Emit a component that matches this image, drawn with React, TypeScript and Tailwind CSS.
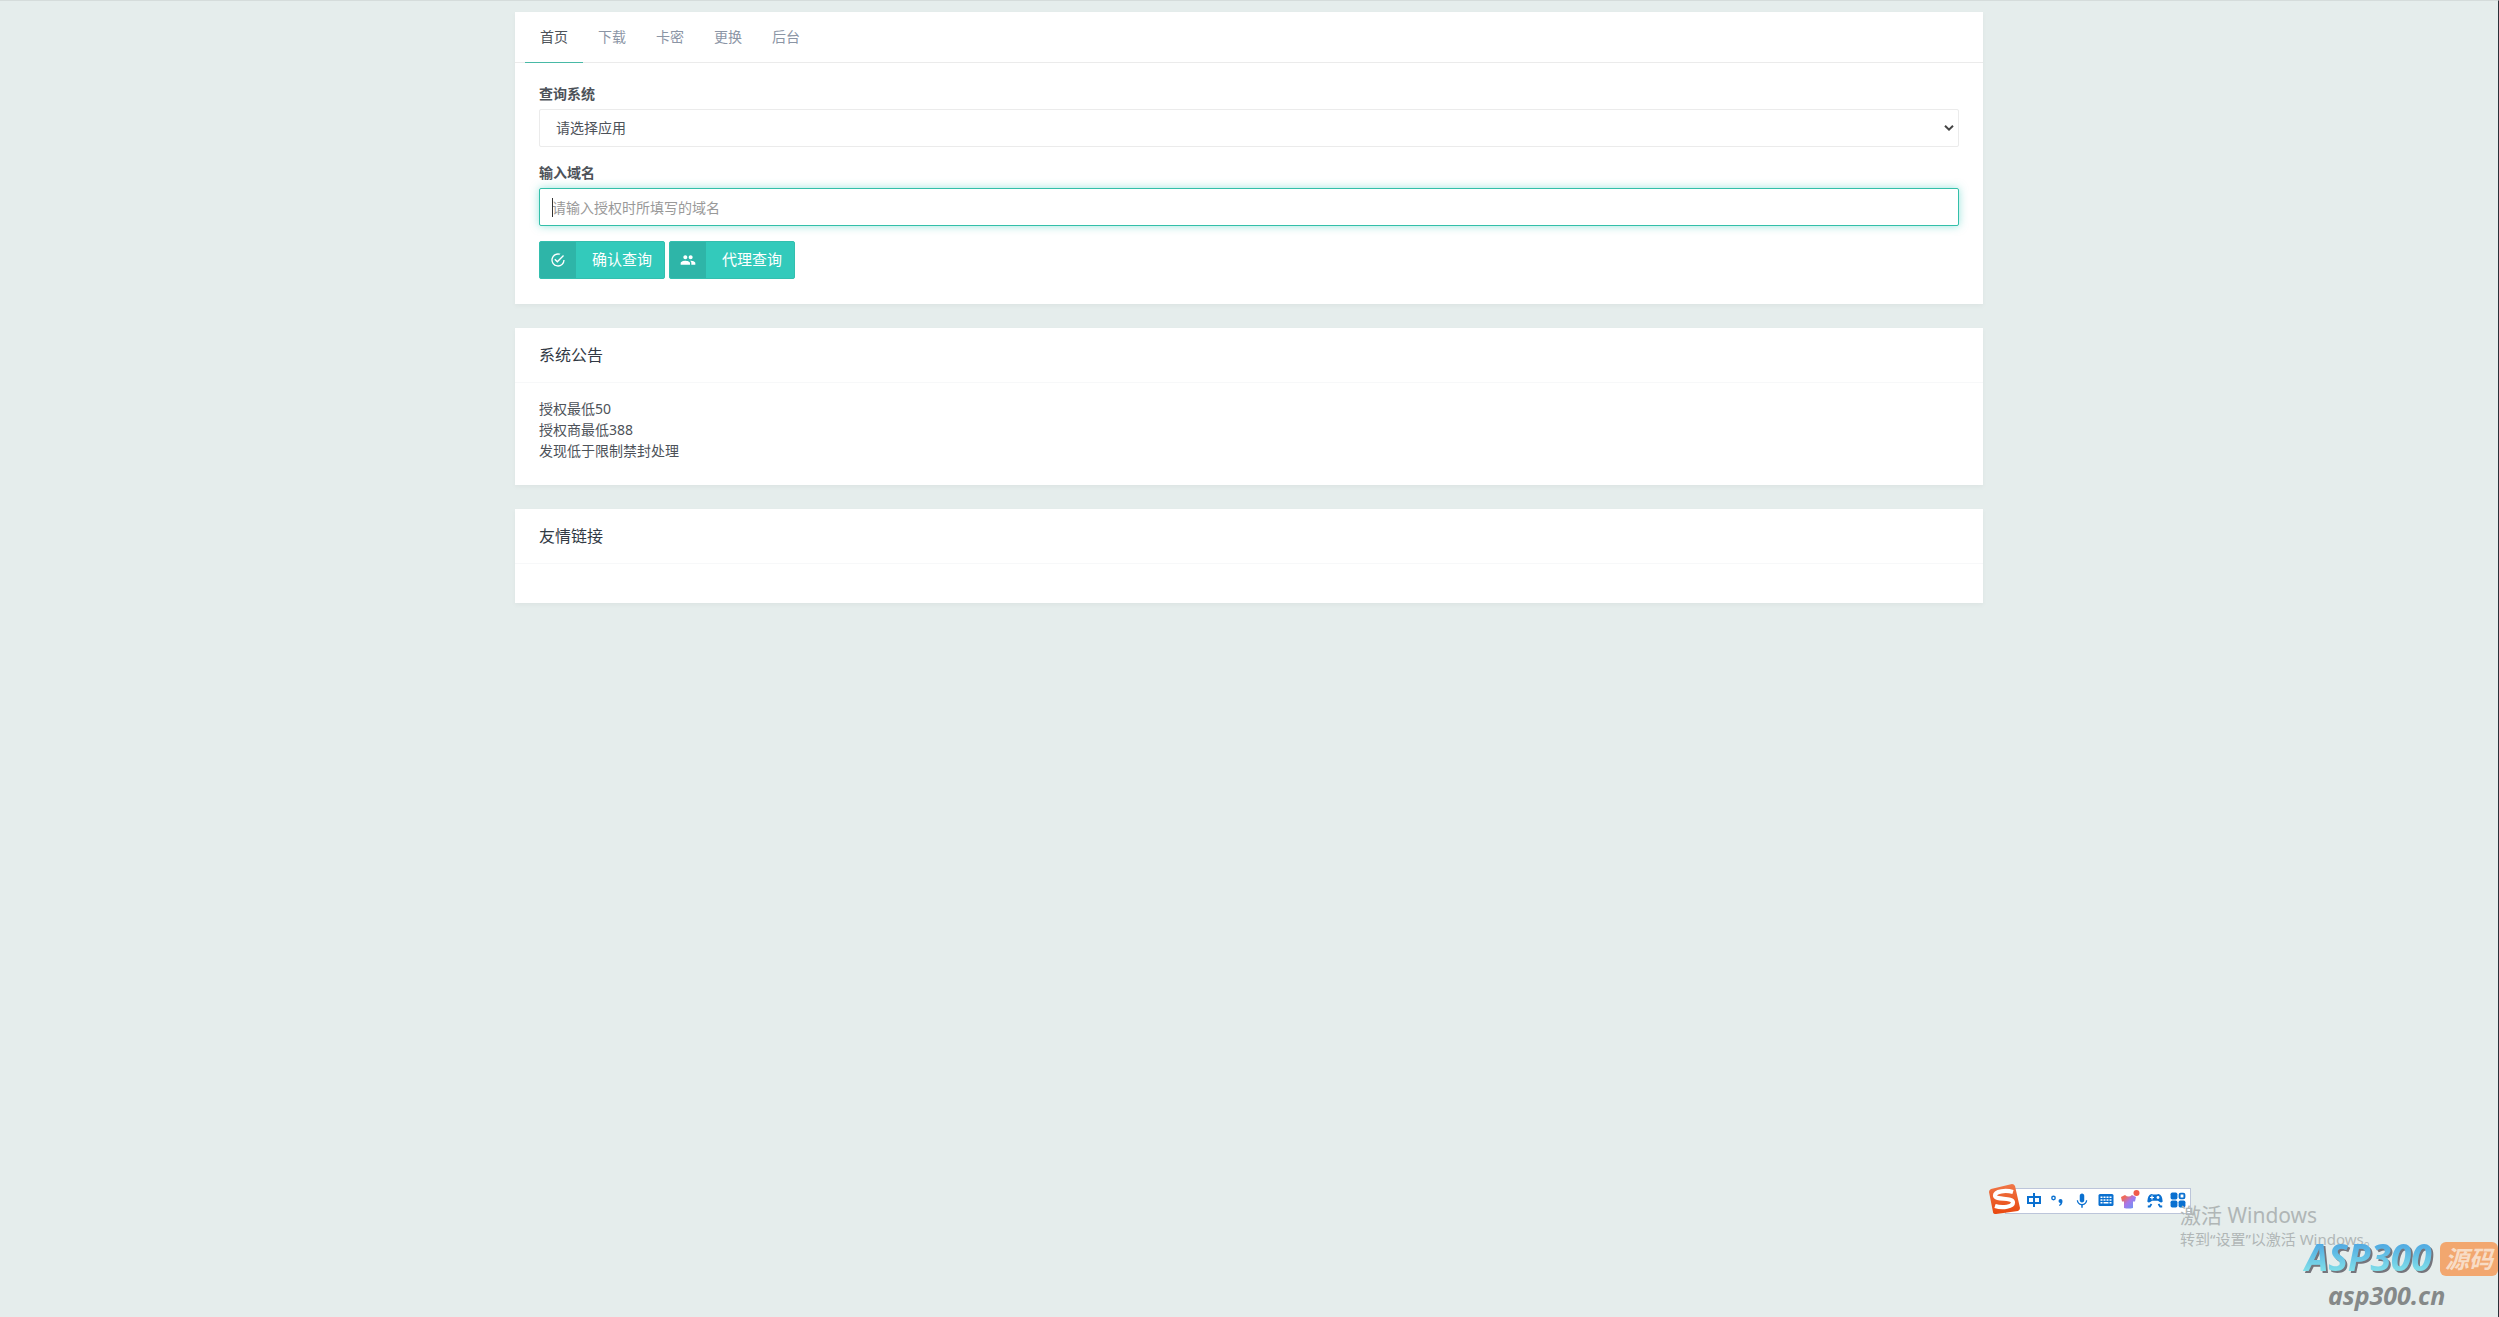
import React from "react";
import { MdMic, MdPeople } from "react-icons/md";

const tabs = ["首页", "下载", "卡密", "更换", "后台"];
const notices = ["授权最低50", "授权商最低388", "发现低于限制禁封处理"];

function Card({ title, children }: { title?: string; children?: React.ReactNode }) {
  return (
    <section className="mb-6 bg-white shadow-[0_2px_5px_rgba(0,0,0,0.04)]">
      {title && (
        <h4 className="border-b border-[#f7f8f9] px-6 py-[15px] text-base leading-6 text-[#313944]">{title}</h4>
      )}
      {children}
    </section>
  );
}

function CheckCircle() {
  return (
    <svg viewBox="0 0 24 24" className="size-4" fill="currentColor" aria-hidden="true">
      <path d="M20 12a8 8 0 1 1-5.800-7.700l1.570-1.570A10 10 0 1 0 22 12zM7.910 10.080 6.500 11.500 11 16 21 6 19.590 4.580 11 13.170z" />
    </svg>
  );
}

function LabelButton({ icon, children }: { icon: React.ReactNode; children: React.ReactNode }) {
  return (
    <button
      type="button"
      className="flex h-[38px] items-center overflow-hidden rounded-xs border border-[#33bfae] bg-[#33cabb] text-[15px] text-white"
    >
      <span className="flex h-full w-9 items-center justify-center bg-[#2eb5a8]">{icon}</span>
      <span className="pr-3 pl-4">{children}</span>
    </button>
  );
}

function QueryForm() {
  return (
    <form className="px-6 pt-5 pb-[25px]">
      <label htmlFor="app" className="mb-1 block leading-[22px] font-bold">
        查询系统
      </label>
      <div className="relative mb-[15px]">
        <select
          id="app"
          className="block h-[38px] w-full appearance-none rounded-xs border border-[#ebebeb] bg-white px-4 text-[#4d5259]"
        >
          <option>请选择应用</option>
        </select>
        <svg
          viewBox="0 0 10 6"
          className="pointer-events-none absolute top-4 right-[5px] h-[6px] w-[10px]"
          fill="none"
          stroke="#444"
          strokeWidth="2"
          aria-hidden="true"
        >
          <path d="M1 .8 5 4.600 9 .8" />
        </svg>
      </div>
      <label htmlFor="domain" className="mb-1 block leading-[22px] font-bold">
        输入域名
      </label>
      <div className="relative mb-[15px]">
        <input
          id="domain"
          type="text"
          placeholder="请输入授权时所填写的域名"
          className="block h-[38px] w-full rounded-xs border border-[#33bfa9] bg-white px-3 shadow-[0_0_8px_rgba(51,202,187,0.5)] outline-none placeholder:text-[#999]"
        />
        <span className="absolute top-[10px] left-[13px] h-[19px] w-px bg-[#333]" />
      </div>
      <div className="flex gap-1">
        <LabelButton icon={<CheckCircle />}>确认查询</LabelButton>
        <LabelButton icon={<MdPeople className="size-4" />}>代理查询</LabelButton>
      </div>
    </form>
  );
}

function InputMethodBar() {
  return (
    <div className="absolute right-[307px] bottom-[103px] flex h-[26px] w-[186px] items-center border border-[#bcc5da] bg-white pl-5 text-[#0a70d0]">
      <svg viewBox="0 0 32 32" className="absolute -top-[6px] -left-[18px] size-8" aria-hidden="true">
        <defs>
          <linearGradient id="sogou" x2="0" y2="1">
            <stop stopColor="#ef7748" />
            <stop offset="1" stopColor="#e9480f" />
          </linearGradient>
        </defs>
        <path d="M3 6 24 1q2 0 3 2l5 22q0 2-2 3L8 31q-3 0-3-2L1 9q0-2 2-3z" fill="url(#sogou)" />
        <path
          d="M25 9C18 7 7 8 7 12.500c0 5 18 1.500 18 7 0 4-10 6-18 3.500"
          fill="none"
          stroke="#fff"
          strokeWidth="4.200"
        />
      </svg>
      <div className="flex w-full justify-between pr-1">
        <svg viewBox="0 0 16 16" className="size-4" fill="none" stroke="currentColor" strokeWidth="2" aria-hidden="true">
          <path d="M2 5h12v6H2zM8 1v14" />
        </svg>
        <svg viewBox="0 0 16 16" className="size-4" aria-hidden="true">
          <circle cx="4.500" cy="6" r="1.700" fill="none" stroke="currentColor" strokeWidth="1.400" />
          <path d="M9.500 9a2 2 0 0 1 4 0q0 4-3 5l-.5-1q1.500-1 1.500-2-2 0-2-2z" fill="currentColor" />
        </svg>
        <MdMic className="size-[18px]" />
        <svg viewBox="0 0 16 16" className="size-4" aria-hidden="true">
          <rect x=".5" y="2" width="15" height="12" rx="1.500" fill="currentColor" />
          <path
            d="M2.500 5.200h2m1 0h2m1 0h2m1 0h2M2.500 8h2m1 0h2m1 0h2m1 0h2M2.500 10.800h2m1 0h5m1 0h2"
            stroke="#fff"
            strokeWidth="1.400"
          />
        </svg>
        <svg viewBox="0 0 18 18" className="size-[18px] overflow-visible" aria-hidden="true">
          <defs>
            <linearGradient id="shirt" x1="0" y1="0" x2="1" y2="1">
              <stop offset=".2" stopColor="#ef6a5a" />
              <stop offset=".5" stopColor="#a877ea" />
              <stop offset="1" stopColor="#5b9cf5" />
            </linearGradient>
          </defs>
          <path d="M0 5 4 3q3.500 3 7 0l4 2-1 4.500-2 0V16q-4.500 1-9 0V9.500l-2 0z" fill="url(#shirt)" />
          <circle cx="15.500" cy="1" r="3" fill="#f15a4a" />
        </svg>
        <svg viewBox="0 0 16 16" className="size-4" aria-hidden="true">
          <path
            d="M4.500 2q3.500 1 7 0 3.800.5 4.200 7.500-1.200 1.500-3 .500L11 8.800H5L3.300 10q-1.800 1-3-.500Q.7 2.500 4.500 2z"
            fill="currentColor"
          />
          <path d="M3 5.500h4M5 3.500v4" stroke="#fff" strokeWidth="1.200" />
          <circle cx="11" cy="5.500" r="1.400" fill="#fff" />
          <path d="M.8 14.500h2L4.500 12m10.700 2.500h-2L11.500 12" fill="none" stroke="currentColor" strokeWidth="1.800" />
        </svg>
        <svg viewBox="0 0 14 14" className="size-4" fill="currentColor" aria-hidden="true">
          <rect x=".5" y=".5" width="6" height="6" rx="1.500" />
          <rect x=".5" y="7.500" width="6" height="6" rx="1.500" />
          <rect x="7.500" y="7.500" width="6" height="6" rx="1.500" />
          <rect x="8.400" y="1.400" width="4.200" height="4.200" rx="1" fill="none" stroke="currentColor" strokeWidth="1.700" />
        </svg>
      </div>
    </div>
  );
}

function Watermarks() {
  return (
    <>
      <div className="absolute right-[129px] bottom-[66px] w-[189px] whitespace-nowrap text-[#b0b6b6]">
        <p className="text-[21px] leading-6">激活 Windows</p>
        <p className="text-[15px] leading-6">转到“设置”以激活 Windows。</p>
      </div>
      <div className="absolute right-0 bottom-1 flex w-[196px] flex-col font-bold italic">
        <div className="flex items-center justify-between">
          <svg viewBox="0 0 136 36" className="h-9 w-[136px] overflow-visible" role="img" aria-label="ASP300">
            <defs>
              <linearGradient id="brand" x2="0" y2="1">
                <stop offset=".25" stopColor="#4fa9e2" />
                <stop offset=".85" stopColor="#86e6ea" />
              </linearGradient>
              <filter id="brandShadow" x="-10%" y="-10%" width="120%" height="130%">
                <feDropShadow dx="2" dy="2" stdDeviation="0" floodColor="#75747c" />
              </filter>
            </defs>
            <text x="3" y="30" fontSize="37" fill="url(#brand)" filter="url(#brandShadow)">
              ASP300
            </text>
          </svg>
          <span className="flex h-[34px] w-[58px] items-center justify-center rounded-md bg-[#f2a76f] text-2xl text-[#f8dcc5]">
            源码
          </span>
        </div>
        <p className="pl-[26px] text-[25px] leading-9 text-[#858989]">asp300.cn</p>
      </div>
    </>
  );
}

export default function App() {
  return (
    <div className="relative min-h-screen border-t border-r border-t-[#d5dcdb] border-r-[#2a2f38] bg-[#e5edec] pt-[11px] font-['Noto_Sans','Noto_Sans_CJK_SC',sans-serif] text-sm text-[#4d5259]">
      <main className="mx-auto w-full max-w-[1468px]">
        <Card>
          <nav className="flex border-b border-[#ebebeb] px-[10px]">
            {tabs.map((tab, i) => (
              <a
                key={tab}
                href="#"
                className={
                  i === 0
                    ? "-mb-px h-[51px] border-b border-[#48b9a6] px-[15px] leading-[50px] text-[#4d5259]"
                    : "h-[50px] px-[15px] leading-[50px] text-[#8b95a5]"
                }
              >
                {tab}
              </a>
            ))}
          </nav>
          <QueryForm />
        </Card>
        <Card title="系统公告">
          <div className="px-6 pt-[15px] pb-6 leading-[21px]">
            {notices.map((n) => (
              <p key={n}>{n}</p>
            ))}
          </div>
        </Card>
        <Card title="友情链接">
          <div className="h-[39px]" />
        </Card>
      </main>
      <InputMethodBar />
      <Watermarks />
    </div>
  );
}
